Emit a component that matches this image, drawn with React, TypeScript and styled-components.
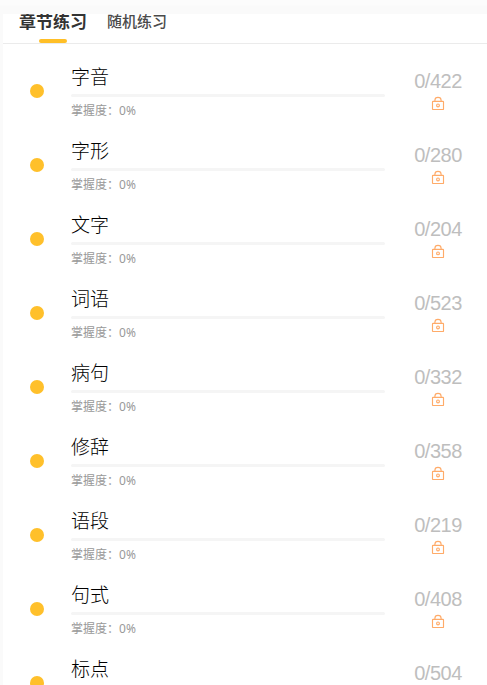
import React from "react";
import styled, { createGlobalStyle } from "styled-components";

const GlobalStyle = createGlobalStyle`
  * { box-sizing: border-box; }
  body {
    margin: 0;
    background: #fafafa;
    font-family: "Noto Sans", "Noto Sans CJK SC", sans-serif;
  }
`;

const Page = styled.div`
  height: 685px;
  overflow: hidden;
  padding: 14px 0 0 3px;
  background: linear-gradient(#fcfcfc 0 5px, #fafafa 6px);
`;

const Panel = styled.main`
  height: 671px;
  overflow: hidden;
  background: #fff;
`;

const Tabs = styled.nav`
  display: flex;
  align-items: flex-start;
  gap: 20px;
  height: 30px;
  padding-left: 16px;
  border-bottom: 1px solid #ebebeb;
  overflow: hidden;
`;

const Tab = styled.button<{ $active?: boolean }>`
  position: relative;
  height: 29px;
  padding: 0 0 16px;
  border: 0;
  background: none;
  font-family: "Noto Sans CJK SC", sans-serif;
  font-size: ${(p) => (p.$active ? 17 : 15)}px;
  font-weight: ${(p) => (p.$active ? 700 : 500)};
  line-height: 13px;
  color: ${(p) => (p.$active ? "#333" : "#4a4a4a")};
  white-space: nowrap;

  &::after {
    content: "";
    display: ${(p) => (p.$active ? "block" : "none")};
    position: absolute;
    left: 20px;
    bottom: 0;
    width: 28px;
    height: 4px;
    border-radius: 2px;
    background: #ffbf27;
  }
`;

const List = styled.ul`
  margin: 0;
  padding: 10px 0 0;
  list-style: none;
`;

const Row = styled.li`
  display: grid;
  grid-template-columns: 14px 314px 48px;
  column-gap: 27px;
  height: 74px;
  padding-left: 27px;
`;

const Dot = styled.span`
  align-self: center;
  width: 14px;
  height: 14px;
  border-radius: 50%;
  background: #ffc02b;
`;

const Details = styled.div`
  padding-top: 8px;
`;

const Title = styled.div`
  height: 32px;
  font-family: "Noto Sans CJK SC", sans-serif;
  font-size: 19px;
  font-weight: 300;
  line-height: 28px;
  color: #000;
`;

const Track = styled.div`
  height: 3px;
  border-radius: 2px;
  background: #f5f5f5;
`;

const Mastery = styled.div`
  display: flex;
  margin-top: 4px;
  font-size: 12px;
  line-height: 20px;
  color: #999;
`;

const Percent = styled.span`
  font-family: "Noto Sans", sans-serif;
`;

const Score = styled.div`
  display: flex;
  flex-direction: column;
  align-items: center;
  padding-top: 16px;
  margin-left: 2px;
  width: 48px;
`;

const Count = styled.div`
  height: 26px;
  font-family: "Liberation Sans", Arial, sans-serif;
  font-size: 20px;
  letter-spacing: -0.5px;
  line-height: 23px;
  color: #bebebe;
`;

const LockSvg = styled.svg`
  display: block;
  width: 14px;
  height: 15px;
`;

const Lock = () => (
  <LockSvg viewBox="0 0 14 15" fill="none" stroke="#ffab69" strokeWidth="1.15">
    <rect x="1.5" y="5.3" width="11" height="8.2" rx="0.6" />
    <path d="M3.9 5.3V4.3a3.1 2.9 0 0 1 6.2 0v1" />
    <circle cx="7" cy="9.4" r="1.4" />
  </LockSvg>
);

const chapters = [
  { name: "字音", total: 422 },
  { name: "字形", total: 280 },
  { name: "文字", total: 204 },
  { name: "词语", total: 523 },
  { name: "病句", total: 332 },
  { name: "修辞", total: 358 },
  { name: "语段", total: 219 },
  { name: "句式", total: 408 },
  { name: "标点", total: 504 },
];

export default function App() {
  return (
    <Page>
      <GlobalStyle />
      <Panel>
        <Tabs>
          <Tab $active>章节练习</Tab>
          <Tab>随机练习</Tab>
        </Tabs>
        <List>
          {chapters.map((c) => (
            <Row key={c.name}>
              <Dot />
              <Details>
                <Title>{c.name}</Title>
                <Track />
                <Mastery>
                  掌握度：<Percent>0%</Percent>
                </Mastery>
              </Details>
              <Score>
                <Count>0/{c.total}</Count>
                <Lock />
              </Score>
            </Row>
          ))}
        </List>
      </Panel>
    </Page>
  );
}
